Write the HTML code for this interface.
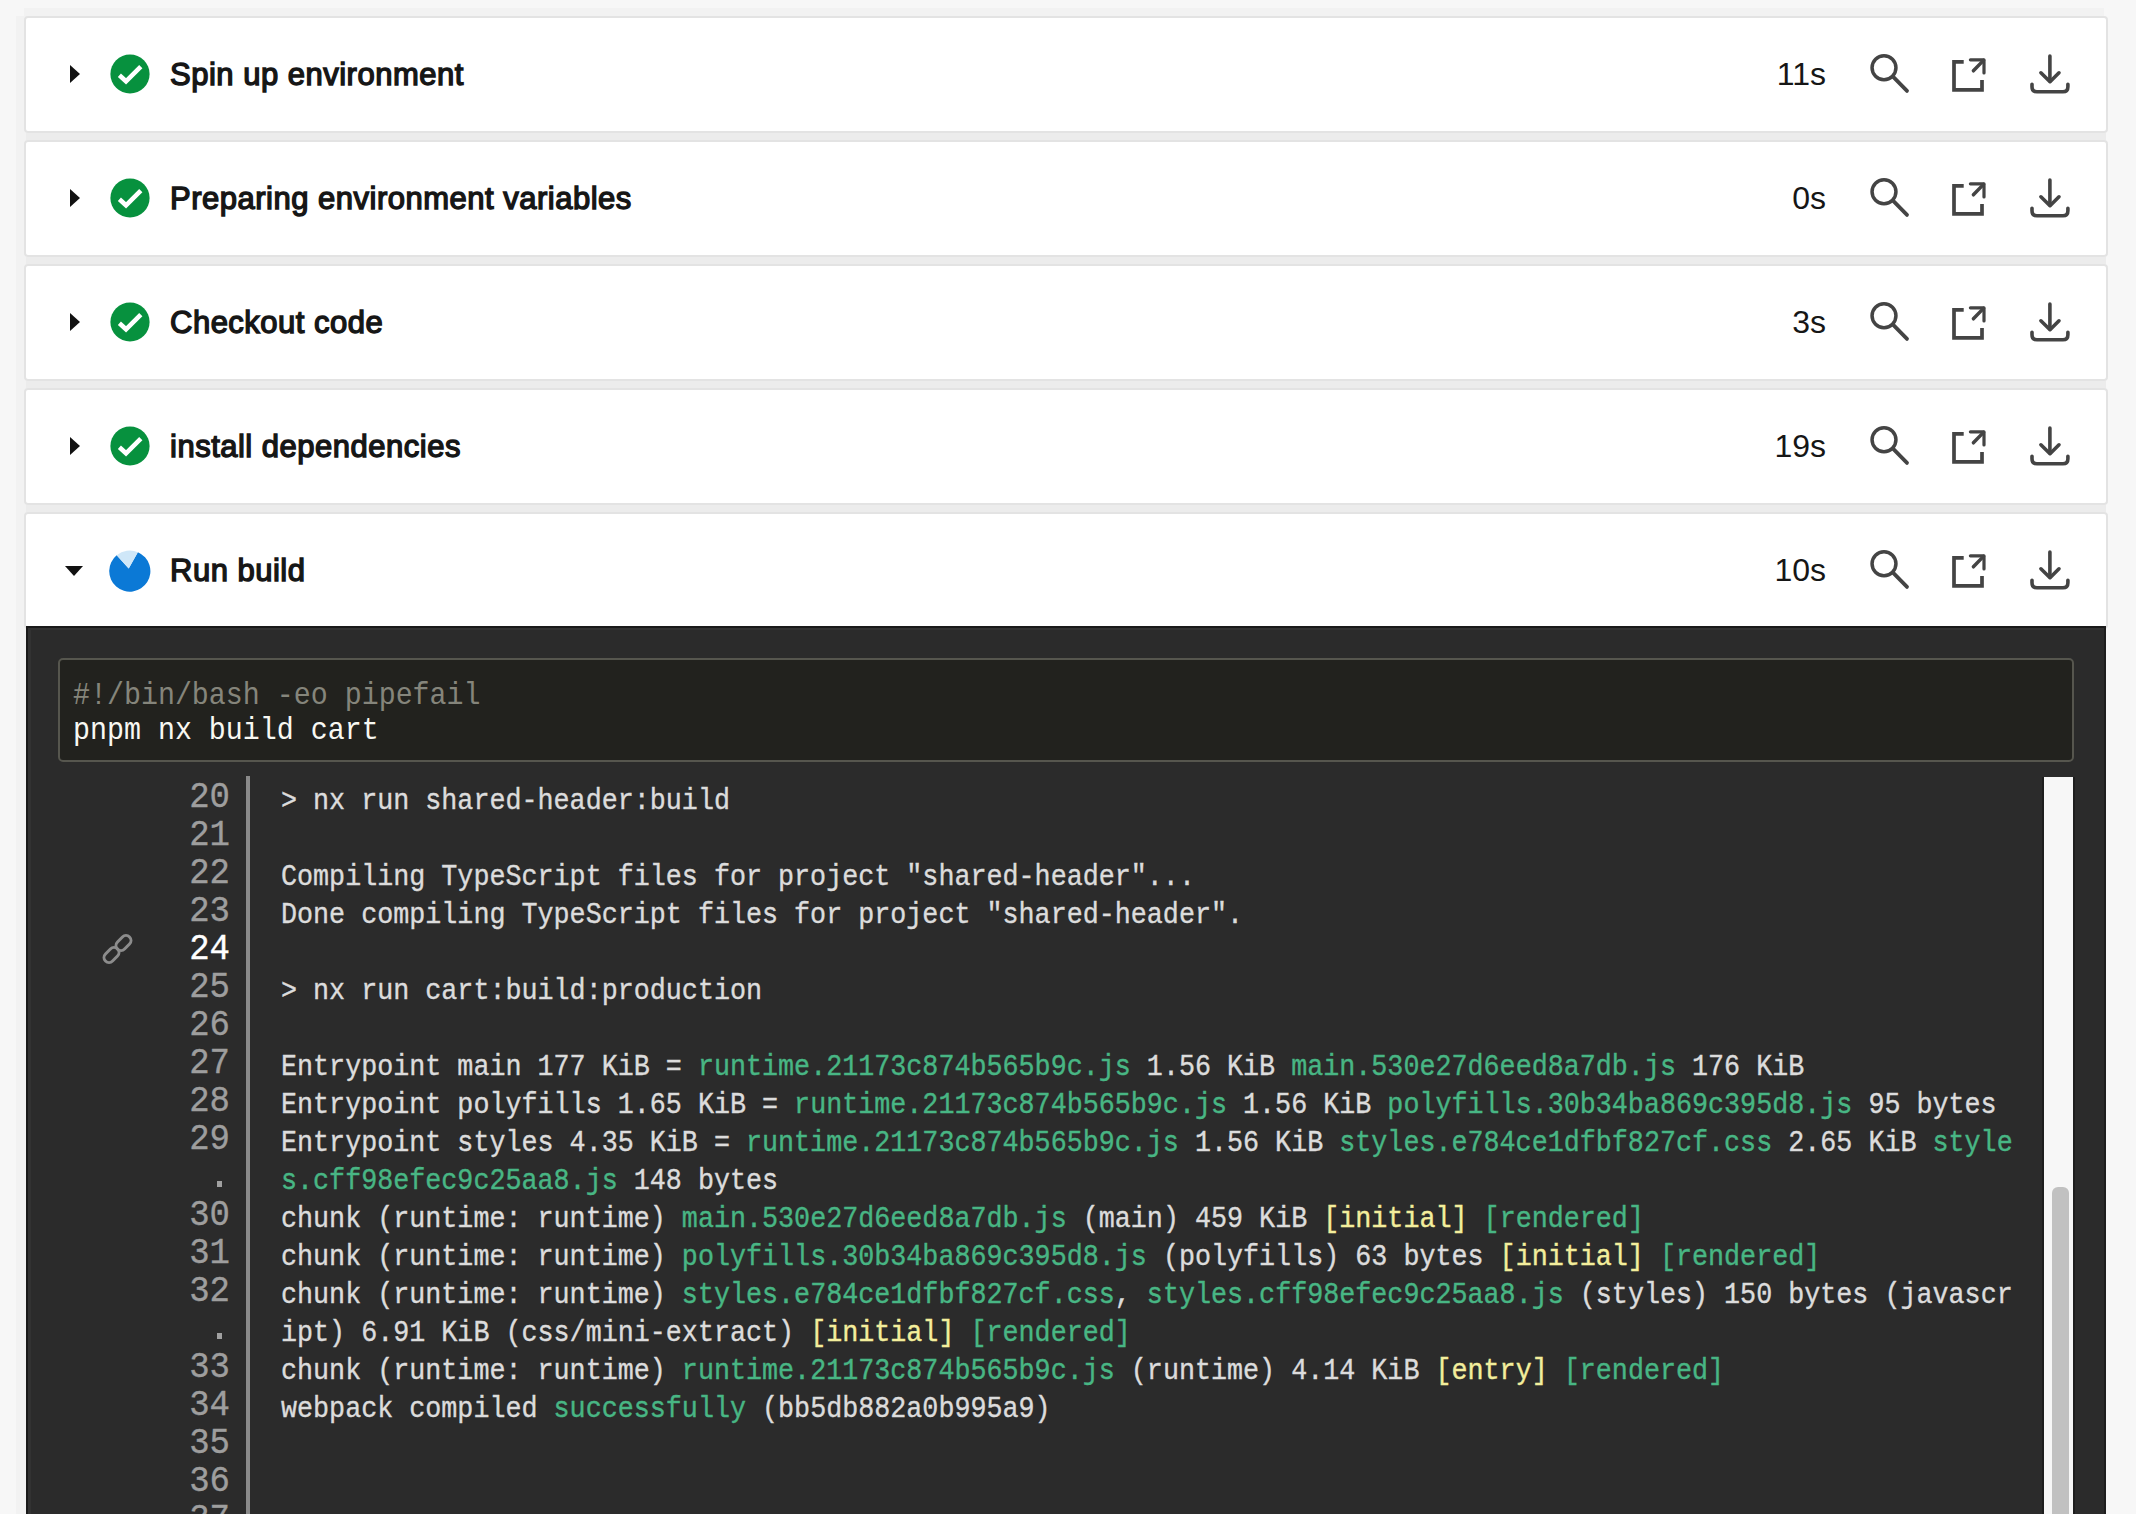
<!DOCTYPE html>
<html><head><meta charset="utf-8">
<style>
*{box-sizing:border-box}
html,body{margin:0;padding:0}
body{width:2136px;height:1514px;overflow:hidden;background:#f7f7f7;position:relative;font-family:"Liberation Sans",sans-serif}
.wrap{position:absolute;left:24px;top:8px;width:2080px;height:10px;background:#f2f2f2}
.wrap2{position:absolute;left:16px;top:16px;width:10px;height:1500px;background:#f2f2f2}
.card{position:absolute;left:24px;width:2084px;height:117px;background:#fff;border:2px solid #e3e3e3;border-radius:4px}
.gap{position:absolute;left:26px;width:2080px;height:7px;background:#ececec}
.tri{position:absolute;left:44px;top:46.5px;width:0;height:0;border-top:9px solid transparent;border-bottom:9px solid transparent;border-left:10px solid #111}
.tri.down{left:39px;top:52px;border-left:9px solid transparent;border-right:9px solid transparent;border-top:10px solid #111;border-bottom:0}
.ico{position:absolute;left:84px;top:36px}
.title{position:absolute;left:144px;top:38.5px;font-size:31px;letter-spacing:0.5px;font-weight:normal;-webkit-text-stroke:1.4px #161616;color:#161616;white-space:nowrap;line-height:36px}
.dur{position:absolute;right:280px;top:38px;font-size:32px;color:#161616;line-height:36px}
.act{position:absolute;top:36px}
.panel{position:absolute;left:26px;top:626px;width:2080px;height:900px;background:#2b2b2b;border-top:2px solid #1a1a1a;border-left:2px solid #1a1a1a;box-shadow:inset 3px 2px 0 #323232}
.code{position:absolute;left:58px;top:658px;width:2016px;height:104px;background:#22221e;border:2px solid #56564e;border-radius:5px}
.cl{position:absolute;left:73px;font-family:"Liberation Mono",monospace;font-size:28.3px;line-height:34px;white-space:pre;transform:scaleY(1.1);transform-origin:0 0}
.ln{position:absolute;left:100px;width:130px;text-align:right;font-family:"Liberation Mono",monospace;font-size:34px;line-height:38px;color:#9e9e9e;white-space:pre;-webkit-text-stroke:0.35px currentColor;transform:scaleY(1.1);transform-origin:0 0}
.dot{position:absolute;left:217px;width:5px;height:6px;background:#a0a0a0;margin-top:22px}
.divider{position:absolute;left:246px;top:776px;width:4px;height:800px;background:#8a8a8a}
.log{position:absolute;left:281px;font-family:"Liberation Mono",monospace;font-size:26.72px;line-height:38px;color:#dcdcdc;white-space:pre;-webkit-text-stroke:0.35px currentColor;transform:scaleY(1.13);transform-origin:0 0}
.g{color:#48b684}.y{color:#f3ee9c}
.link{position:absolute;left:100px;top:933px}
.track{position:absolute;left:2042px;top:777px;width:33px;height:800px;background:#f7f7f7;border-left:2px solid #1e1e1e;border-right:2px solid #1e1e1e}
.thumb{position:absolute;left:8px;top:410px;width:17px;height:600px;background:#c1c1c1;border-radius:6px}
.pr{position:absolute;left:2104px;top:626px;width:2px;height:900px;background:#1e1e1e}

</style></head><body>
<div class="wrap"></div><div class="wrap2"></div>
<div class="card" style="top:16px"><div class="tri"></div><svg class="ico" style="left:83px;top:35px" width="42" height="42" viewBox="0 0 42 42"><circle cx="21" cy="21" r="19.6" fill="#07913e"/><path d="M10.4 22.3 L17 28.3 L31.8 13.6" fill="none" stroke="#fff" stroke-width="4.6" stroke-linejoin="miter"/></svg><div class="title">Spin up environment</div><div class="dur">11s</div><svg class="act" style="left:1844px" width="48" height="48" viewBox="0 0 48 48"><circle cx="14" cy="13.75" r="11.95" fill="none" stroke="#444" stroke-width="3.5"/><path d="M23 22.7 L37 36.9" stroke="#444" stroke-width="3.8" stroke-linecap="round"/></svg><svg class="act" style="left:1926px" width="48" height="48" viewBox="0 0 48 48"><path d="M11.7 7.9 H2 V35.8 H30 V26" fill="none" stroke="#444" stroke-width="3.7"/><path d="M21.4 16.8 L31.5 6.4" stroke="#444" stroke-width="3.5" stroke-linecap="round"/><path d="M18.4 5.8 H32 V19" fill="none" stroke="#444" stroke-width="3.2" stroke-linecap="round" stroke-linejoin="round"/></svg><svg class="act" style="left:2004px" width="48" height="48" viewBox="0 0 48 48"><path d="M19.9 2 V27" stroke="#444" stroke-width="3.6" stroke-linecap="round"/><path d="M10.9 18.8 L20 27.7 L29 18.8" fill="none" stroke="#444" stroke-width="3.6" stroke-linecap="round" stroke-linejoin="round"/><path d="M2 30.2 V32.8 Q2 37.8 7 37.8 H33 Q37.9 37.8 37.9 32.8 V30.2" fill="none" stroke="#444" stroke-width="3.6" stroke-linecap="round"/></svg></div>
<div class="gap" style="top:133px"></div>
<div class="card" style="top:140px"><div class="tri"></div><svg class="ico" style="left:83px;top:35px" width="42" height="42" viewBox="0 0 42 42"><circle cx="21" cy="21" r="19.6" fill="#07913e"/><path d="M10.4 22.3 L17 28.3 L31.8 13.6" fill="none" stroke="#fff" stroke-width="4.6" stroke-linejoin="miter"/></svg><div class="title">Preparing environment variables</div><div class="dur">0s</div><svg class="act" style="left:1844px" width="48" height="48" viewBox="0 0 48 48"><circle cx="14" cy="13.75" r="11.95" fill="none" stroke="#444" stroke-width="3.5"/><path d="M23 22.7 L37 36.9" stroke="#444" stroke-width="3.8" stroke-linecap="round"/></svg><svg class="act" style="left:1926px" width="48" height="48" viewBox="0 0 48 48"><path d="M11.7 7.9 H2 V35.8 H30 V26" fill="none" stroke="#444" stroke-width="3.7"/><path d="M21.4 16.8 L31.5 6.4" stroke="#444" stroke-width="3.5" stroke-linecap="round"/><path d="M18.4 5.8 H32 V19" fill="none" stroke="#444" stroke-width="3.2" stroke-linecap="round" stroke-linejoin="round"/></svg><svg class="act" style="left:2004px" width="48" height="48" viewBox="0 0 48 48"><path d="M19.9 2 V27" stroke="#444" stroke-width="3.6" stroke-linecap="round"/><path d="M10.9 18.8 L20 27.7 L29 18.8" fill="none" stroke="#444" stroke-width="3.6" stroke-linecap="round" stroke-linejoin="round"/><path d="M2 30.2 V32.8 Q2 37.8 7 37.8 H33 Q37.9 37.8 37.9 32.8 V30.2" fill="none" stroke="#444" stroke-width="3.6" stroke-linecap="round"/></svg></div>
<div class="gap" style="top:257px"></div>
<div class="card" style="top:264px"><div class="tri"></div><svg class="ico" style="left:83px;top:35px" width="42" height="42" viewBox="0 0 42 42"><circle cx="21" cy="21" r="19.6" fill="#07913e"/><path d="M10.4 22.3 L17 28.3 L31.8 13.6" fill="none" stroke="#fff" stroke-width="4.6" stroke-linejoin="miter"/></svg><div class="title">Checkout code</div><div class="dur">3s</div><svg class="act" style="left:1844px" width="48" height="48" viewBox="0 0 48 48"><circle cx="14" cy="13.75" r="11.95" fill="none" stroke="#444" stroke-width="3.5"/><path d="M23 22.7 L37 36.9" stroke="#444" stroke-width="3.8" stroke-linecap="round"/></svg><svg class="act" style="left:1926px" width="48" height="48" viewBox="0 0 48 48"><path d="M11.7 7.9 H2 V35.8 H30 V26" fill="none" stroke="#444" stroke-width="3.7"/><path d="M21.4 16.8 L31.5 6.4" stroke="#444" stroke-width="3.5" stroke-linecap="round"/><path d="M18.4 5.8 H32 V19" fill="none" stroke="#444" stroke-width="3.2" stroke-linecap="round" stroke-linejoin="round"/></svg><svg class="act" style="left:2004px" width="48" height="48" viewBox="0 0 48 48"><path d="M19.9 2 V27" stroke="#444" stroke-width="3.6" stroke-linecap="round"/><path d="M10.9 18.8 L20 27.7 L29 18.8" fill="none" stroke="#444" stroke-width="3.6" stroke-linecap="round" stroke-linejoin="round"/><path d="M2 30.2 V32.8 Q2 37.8 7 37.8 H33 Q37.9 37.8 37.9 32.8 V30.2" fill="none" stroke="#444" stroke-width="3.6" stroke-linecap="round"/></svg></div>
<div class="gap" style="top:381px"></div>
<div class="card" style="top:388px"><div class="tri"></div><svg class="ico" style="left:83px;top:35px" width="42" height="42" viewBox="0 0 42 42"><circle cx="21" cy="21" r="19.6" fill="#07913e"/><path d="M10.4 22.3 L17 28.3 L31.8 13.6" fill="none" stroke="#fff" stroke-width="4.6" stroke-linejoin="miter"/></svg><div class="title">install dependencies</div><div class="dur">19s</div><svg class="act" style="left:1844px" width="48" height="48" viewBox="0 0 48 48"><circle cx="14" cy="13.75" r="11.95" fill="none" stroke="#444" stroke-width="3.5"/><path d="M23 22.7 L37 36.9" stroke="#444" stroke-width="3.8" stroke-linecap="round"/></svg><svg class="act" style="left:1926px" width="48" height="48" viewBox="0 0 48 48"><path d="M11.7 7.9 H2 V35.8 H30 V26" fill="none" stroke="#444" stroke-width="3.7"/><path d="M21.4 16.8 L31.5 6.4" stroke="#444" stroke-width="3.5" stroke-linecap="round"/><path d="M18.4 5.8 H32 V19" fill="none" stroke="#444" stroke-width="3.2" stroke-linecap="round" stroke-linejoin="round"/></svg><svg class="act" style="left:2004px" width="48" height="48" viewBox="0 0 48 48"><path d="M19.9 2 V27" stroke="#444" stroke-width="3.6" stroke-linecap="round"/><path d="M10.9 18.8 L20 27.7 L29 18.8" fill="none" stroke="#444" stroke-width="3.6" stroke-linecap="round" stroke-linejoin="round"/><path d="M2 30.2 V32.8 Q2 37.8 7 37.8 H33 Q37.9 37.8 37.9 32.8 V30.2" fill="none" stroke="#444" stroke-width="3.6" stroke-linecap="round"/></svg></div>
<div class="gap" style="top:505px"></div>
<div class="card" style="top:512px"><div class="tri down"></div><svg class="ico" style="left:82px;top:34px" width="46" height="46" viewBox="0 0 46 46"><path d="M20.7 20.6 L29.85 4.14 A20.6 20.6 0 1 1 8.67 7.23 Z" fill="#0b79d6"/><path d="M20.7 20.6 L8.67 7.23 A20.6 20.6 0 0 1 29.85 4.14 Z" fill="#cfe7f8"/></svg><div class="title">Run build</div><div class="dur">10s</div><svg class="act" style="left:1844px" width="48" height="48" viewBox="0 0 48 48"><circle cx="14" cy="13.75" r="11.95" fill="none" stroke="#444" stroke-width="3.5"/><path d="M23 22.7 L37 36.9" stroke="#444" stroke-width="3.8" stroke-linecap="round"/></svg><svg class="act" style="left:1926px" width="48" height="48" viewBox="0 0 48 48"><path d="M11.7 7.9 H2 V35.8 H30 V26" fill="none" stroke="#444" stroke-width="3.7"/><path d="M21.4 16.8 L31.5 6.4" stroke="#444" stroke-width="3.5" stroke-linecap="round"/><path d="M18.4 5.8 H32 V19" fill="none" stroke="#444" stroke-width="3.2" stroke-linecap="round" stroke-linejoin="round"/></svg><svg class="act" style="left:2004px" width="48" height="48" viewBox="0 0 48 48"><path d="M19.9 2 V27" stroke="#444" stroke-width="3.6" stroke-linecap="round"/><path d="M10.9 18.8 L20 27.7 L29 18.8" fill="none" stroke="#444" stroke-width="3.6" stroke-linecap="round" stroke-linejoin="round"/><path d="M2 30.2 V32.8 Q2 37.8 7 37.8 H33 Q37.9 37.8 37.9 32.8 V30.2" fill="none" stroke="#444" stroke-width="3.6" stroke-linecap="round"/></svg></div>
<div class="panel"></div>
<div class="code"></div>
<div class="cl" style="top:676px;color:#85857b">#!/bin/bash -eo pipefail</div>
<div class="cl" style="top:711px;color:#f8f8f2">pnpm nx build cart</div>
<div class="ln" style="top:776px">20</div>
<div class="ln" style="top:814px">21</div>
<div class="ln" style="top:852px">22</div>
<div class="ln" style="top:890px">23</div>
<div class="ln" style="top:928px;color:#fff">24</div>
<div class="ln" style="top:966px">25</div>
<div class="ln" style="top:1004px">26</div>
<div class="ln" style="top:1042px">27</div>
<div class="ln" style="top:1080px">28</div>
<div class="ln" style="top:1118px">29</div>
<div class="dot" style="top:1159px"></div>
<div class="ln" style="top:1194px">30</div>
<div class="ln" style="top:1232px">31</div>
<div class="ln" style="top:1270px">32</div>
<div class="dot" style="top:1311px"></div>
<div class="ln" style="top:1346px">33</div>
<div class="ln" style="top:1384px">34</div>
<div class="ln" style="top:1422px">35</div>
<div class="ln" style="top:1460px">36</div>
<div class="ln" style="top:1498px">37</div>
<div class="divider"></div>
<div class="log" style="top:780px">&gt; nx run shared-header:build</div>
<div class="log" style="top:818px"></div>
<div class="log" style="top:856px">Compiling TypeScript files for project "shared-header"...</div>
<div class="log" style="top:894px">Done compiling TypeScript files for project "shared-header".</div>
<div class="log" style="top:932px"></div>
<div class="log" style="top:970px">&gt; nx run cart:build:production</div>
<div class="log" style="top:1008px"></div>
<div class="log" style="top:1046px">Entrypoint main 177 KiB = <span class="g">runtime.21173c874b565b9c.js</span> 1.56 KiB <span class="g">main.530e27d6eed8a7db.js</span> 176 KiB</div>
<div class="log" style="top:1084px">Entrypoint polyfills 1.65 KiB = <span class="g">runtime.21173c874b565b9c.js</span> 1.56 KiB <span class="g">polyfills.30b34ba869c395d8.js</span> 95 bytes</div>
<div class="log" style="top:1122px">Entrypoint styles 4.35 KiB = <span class="g">runtime.21173c874b565b9c.js</span> 1.56 KiB <span class="g">styles.e784ce1dfbf827cf.css</span> 2.65 KiB <span class="g">style</span></div>
<div class="log" style="top:1160px"><span class="g">s.cff98efec9c25aa8.js</span> 148 bytes</div>
<div class="log" style="top:1198px">chunk (runtime: runtime) <span class="g">main.530e27d6eed8a7db.js</span> (main) 459 KiB <span class="y">[initial]</span> <span class="g">[rendered]</span></div>
<div class="log" style="top:1236px">chunk (runtime: runtime) <span class="g">polyfills.30b34ba869c395d8.js</span> (polyfills) 63 bytes <span class="y">[initial]</span> <span class="g">[rendered]</span></div>
<div class="log" style="top:1274px">chunk (runtime: runtime) <span class="g">styles.e784ce1dfbf827cf.css</span>, <span class="g">styles.cff98efec9c25aa8.js</span> (styles) 150 bytes (javascr</div>
<div class="log" style="top:1312px">ipt) 6.91 KiB (css/mini-extract) <span class="y">[initial]</span> <span class="g">[rendered]</span></div>
<div class="log" style="top:1350px">chunk (runtime: runtime) <span class="g">runtime.21173c874b565b9c.js</span> (runtime) 4.14 KiB <span class="y">[entry]</span> <span class="g">[rendered]</span></div>
<div class="log" style="top:1388px">webpack compiled <span class="g">successfully</span> (bb5db882a0b995a9)</div>
<svg class="link" width="36" height="36" viewBox="0 0 36 36"><g fill="none" stroke="#8c8c8c" stroke-width="3"><rect x="15" y="5" width="17" height="10" rx="5" transform="rotate(-45 23.5 10)"/><rect x="3" y="17" width="17" height="10" rx="5" transform="rotate(-45 11.5 22)"/></g></svg>
<div class="track"><div class="thumb"></div></div>
<div class="pr"></div>
</body></html>
